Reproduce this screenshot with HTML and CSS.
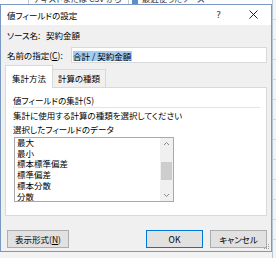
FILE: index.html
```html
<!DOCTYPE html>
<html>
<head>
	<title>値フィールドの設定</title>
	<meta http-equiv="content-type" content="text/html; charset=UTF-8">
	<link rel="stylesheet" href="styles.css">
</head>
<body>
	<div id="desk">
		<div id="ribbon">
			<span class="rb-box">テキストまたは CSV から</span>
			<span class="rb-icon"></span>
			<span class="rb-item">最近使ったソース</span>
		</div>
		<div id="sheet"></div>

		<div id="dialog">
			<div class="titlebar">
				<span class="title">値フィールドの設定</span>
				<span class="help">?</span>
				<svg class="close" width="9" height="9" viewBox="0 0 9 9">
					<path d="M0.5 0.5 L8.5 8.5 M8.5 0.5 L0.5 8.5" stroke="#222" stroke-width="1" fill="none"/>
				</svg>
			</div>
			<div class="content">
				<div class="row source">
					<span class="label">ソース名:</span>
					<span>契約金額</span>
				</div>
				<div class="row name">
					<span class="label">名前の指定(<u>C</u>):</span>
					<div class="input"><span class="sel">合計 / 契約金額</span></div>
				</div>
				<div class="tabs">
					<span class="tab active">集計方法</span>
					<span class="tab">計算の種類</span>
				</div>
				<div class="panel">
					<div class="group">値フィールドの集計(S)</div>
					<div class="hint">集計に使用する計算の種類を選択してください</div>
					<div class="hint">選択したフィールドのデータ</div>
					<div class="listbox">
						<ul>
							<li>最大</li>
							<li>最小</li>
							<li>標本標準偏差</li>
							<li>標準偏差</li>
							<li>標本分散</li>
							<li>分散</li>
						</ul>
						<div class="scroll">
							<svg width="13" height="8" viewBox="0 0 13 8"><path d="M4 5 L6.5 2.5 L9 5" stroke="#8a8a8a" fill="none"/></svg>
							<div class="track"><div class="thumb"></div></div>
							<svg width="13" height="8" viewBox="0 0 13 8"><path d="M4 3 L6.5 5.5 L9 3" stroke="#8a8a8a" fill="none"/></svg>
						</div>
					</div>
				</div>
				<div class="buttons">
					<span class="btn format">表示形式(<u>N</u>)</span>
					<span class="spacer"></span>
					<span class="btn ok">OK</span>
					<span class="btn">キャンセル</span>
				</div>
			</div>
			<svg class="grip" width="6" height="6" viewBox="0 0 6 6">
				<rect x="4" y="0" width="1" height="1" fill="#9a9a9a"/>
				<rect x="2" y="2" width="1" height="1" fill="#9a9a9a"/>
				<rect x="4" y="2" width="1" height="1" fill="#9a9a9a"/>
				<rect x="0" y="4" width="1" height="1" fill="#9a9a9a"/>
				<rect x="2" y="4" width="1" height="1" fill="#9a9a9a"/>
				<rect x="4" y="4" width="1" height="1" fill="#9a9a9a"/>
			</svg>
		</div>
	</div>
</body>
</html>
```

FILE: styles.css
```css
*{
	margin: 0;
	padding: 0;
	box-sizing: border-box;
}

body{
	font-family: "Noto Sans CJK JP", "Noto Sans", sans-serif;
	font-feature-settings: "palt";
	font-size: 8.5px;
	color: #000;
	background: #e9e9e9;
}

u{
	text-decoration: underline;
	text-underline-offset: 1px;
}

#desk{
	position: relative;
	width: 276px;
	height: 258px;
	overflow: hidden;
	background: #f3f3f3;
}

/* excel behind the dialog */
#ribbon{
	height: 4px;
	overflow: hidden;
	display: flex;
	align-items: flex-start;
	padding-left: 28px;
	background: #fdfdfd;
	color: #333;
}

#ribbon span{
	margin-top: -7px;
	line-height: 11px;
}

#ribbon .rb-box{
	padding: 0 6px 0 4px;
	border: 1px solid #c6c6c6;
	border-top: none;
}

#ribbon .rb-icon{
	width: 6px;
	height: 11px;
	margin: -7px 4px 0 3px;
	background: #5b8fc9;
}

#sheet{
	position: absolute;
	right: 0;
	top: 0;
	width: 4px;
	height: 258px;
	background: repeating-linear-gradient(#f4f4f4 0, #f4f4f4 19px, #d6d6d6 19px, #d6d6d6 20px);
	border-left: 1px solid #b9c6d6;
}

#dialog{
	position: absolute;
	left: 0;
	top: 4px;
	width: 272px;
	height: 248px;
	border: 1px solid #7b98c2;
	background: #f0f0f0;
	display: flex;
	flex-direction: column;
}

.titlebar{
	height: 20px;
	background: #fff;
	display: flex;
	align-items: center;
	padding: 0 0 1px 6px;
}

.titlebar .title{
	flex: 1;
}

.titlebar .help{
	font-family: "DejaVu Sans", sans-serif;
	font-size: 9px;
	color: #333;
	margin-right: 28px;
}

.titlebar .close{
	margin-right: 13px;
}

.content{
	flex: 1;
	padding: 0 4px;
	display: flex;
	flex-direction: column;
}

.row{
	display: flex;
	align-items: center;
	padding-left: 2px;
	line-height: 12px;
}

.row.source{
	margin-top: 4px;
}

.row .label{
	width: 39px;
}

.row.name{
	margin-top: 6px;
	height: 16px;
}

.row.name .label{
	width: 64px;
}

.row .input{
	flex: 1;
	height: 16px;
	background: #fff;
	border: 1px solid #d9d9d9;
	padding: 1px 0 0 1px;
	display: flex;
	align-items: center;
}

.row .input .sel{
	background: #a2cdf1;
	line-height: 10px;
	padding-right: 1px;
}

.tabs{
	display: flex;
	align-items: flex-end;
	height: 22px;
	margin-top: 2px;
	position: relative;
	z-index: 1;
}

.tab{
	display: flex;
	align-items: flex-end;
	justify-content: center;
	height: 18px;
	width: 54px;
	line-height: 12px;
	padding-bottom: 3px;
	border: 1px solid #d9d9d9;
	border-bottom: none;
	margin-left: -1px;
}

.tab.active{
	width: 48px;
	height: 23px;
	margin: 0 0 -1px 0;
	padding-bottom: 4px;
	background: #fff;
}

.panel{
	height: 129px;
	background: #fff;
	border: 1px solid #d9d9d9;
	padding: 6px 6px 0 7px;
}

.group{
	line-height: 12px;
	padding-bottom: 1px;
	border-bottom: 1px solid #e3e3e3;
}

.hint{
	line-height: 14px;
}

.listbox{
	display: flex;
	width: 160px;
	height: 65px;
	margin: 1px 0 0 1px;
	border: 1px solid #a9a9a9;
	overflow: hidden;
}

.listbox ul{
	flex: 1;
	list-style: none;
	margin-top: -1px;
	padding-left: 2px;
	line-height: 10.7px;
}

.scroll{
	width: 13px;
	background: #f0f0f0;
	display: flex;
	flex-direction: column;
	align-items: center;
}

.scroll svg{
	margin: 2px 0;
}

.scroll .track{
	flex: 1;
	width: 100%;
	padding: 12px 1px 0 1px;
}

.scroll .thumb{
	height: 18px;
	background: #cdcdcd;
}

.buttons{
	display: flex;
	margin-top: 14px;
	height: 18px;
}

.btn{
	display: flex;
	align-items: center;
	justify-content: center;
	width: 57px;
	height: 18px;
	background: #e1e1e1;
	border: 1px solid #adadad;
	line-height: 12px;
}

.btn.format{
	width: 62px;
	margin-left: 2px;
}

.btn.ok{
	border-color: #0078d7;
	margin-right: 7px;
}

.spacer{
	flex: 1;
}

.grip{
	position: absolute;
	right: 1px;
	bottom: 1px;
}
```
